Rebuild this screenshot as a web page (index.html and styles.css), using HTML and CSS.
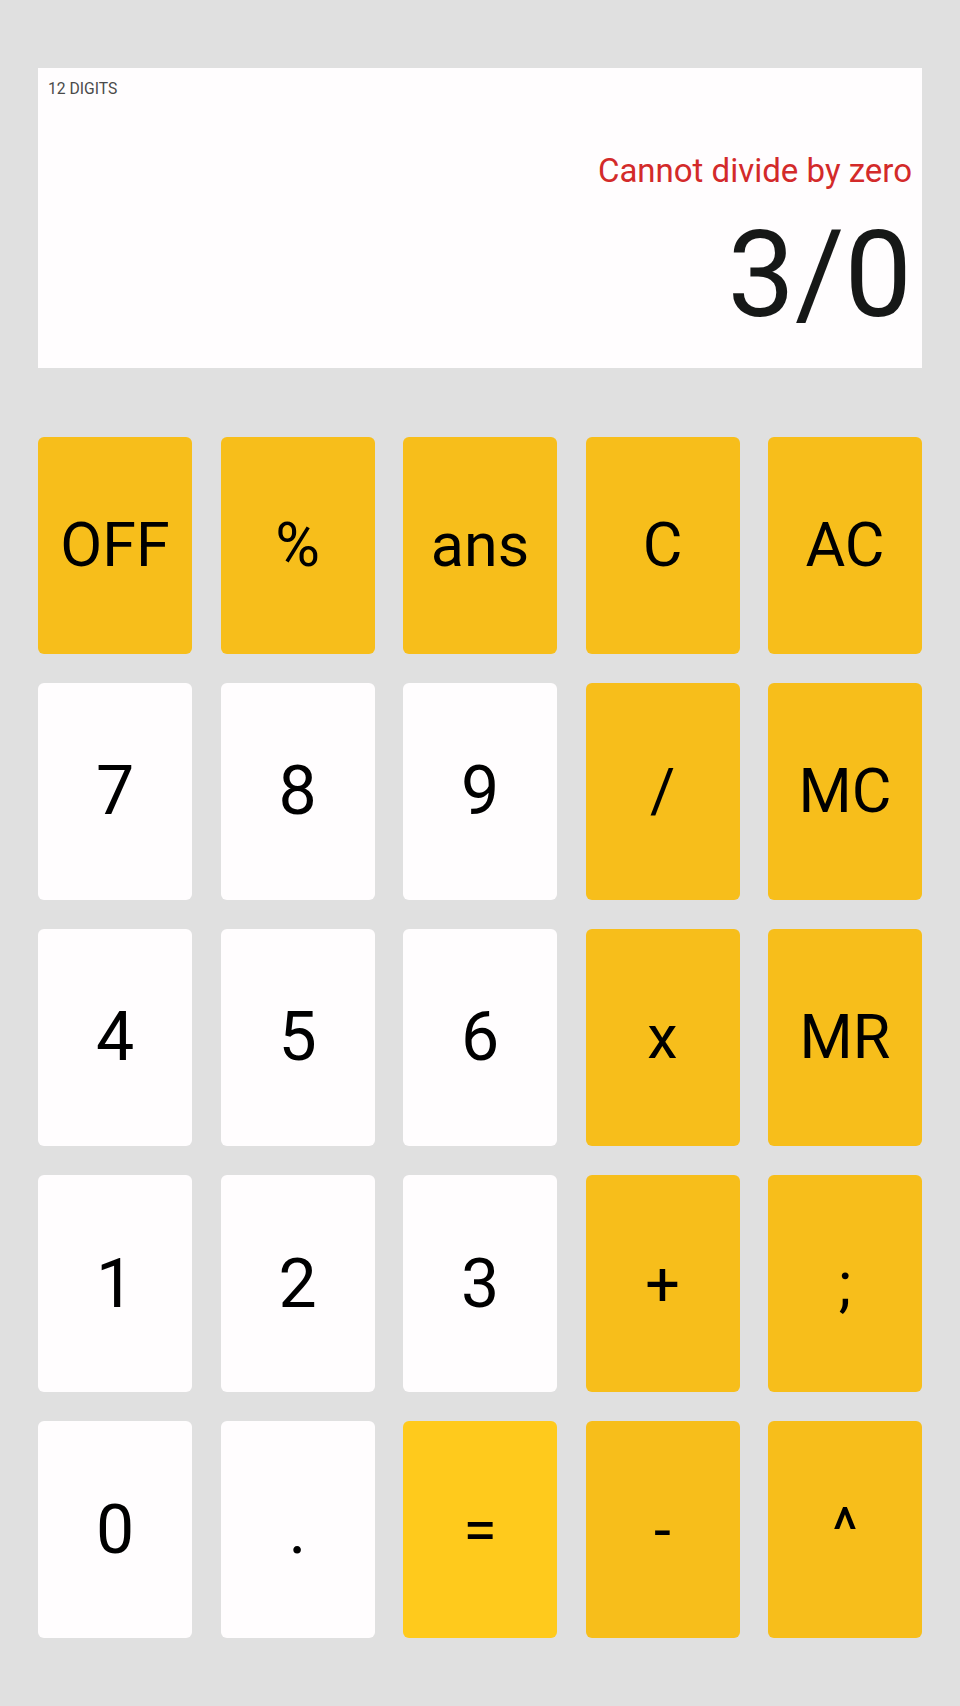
FILE: index.html
```html
<!DOCTYPE html>
<html lang="en">
<head>
<meta charset="utf-8">
<title>Calculator</title>
<link rel="stylesheet" href="styles.css">
</head>
<body>
<main class="calc">
  <section class="display">
    <div class="digits-label">12 DIGITS</div>
    <div class="message">Cannot divide by zero</div>
    <div class="expression">3/0</div>
  </section>
  <section class="keypad">
    <div class="key op">OFF</div>
    <div class="key op">%</div>
    <div class="key op">ans</div>
    <div class="key op">C</div>
    <div class="key op">AC</div>

    <div class="key num">7</div>
    <div class="key num">8</div>
    <div class="key num">9</div>
    <div class="key op">/</div>
    <div class="key op">MC</div>

    <div class="key num">4</div>
    <div class="key num">5</div>
    <div class="key num">6</div>
    <div class="key op">x</div>
    <div class="key op">MR</div>

    <div class="key num">1</div>
    <div class="key num">2</div>
    <div class="key num">3</div>
    <div class="key op">+</div>
    <div class="key op">;</div>

    <div class="key num">0</div>
    <div class="key num">.</div>
    <div class="key op equals">=</div>
    <div class="key op">-</div>
    <div class="key op">^</div>
  </section>
</main>
</body>
</html>
```
FILE: styles.css
```css
html, body {
  margin: 0;
  padding: 0;
  background: #e0e0e0;
  font-family: Roboto, "Liberation Sans", sans-serif;
}

.calc {
  padding: 68px 38px 0;
  width: 884px;
}

.display {
  background: #fffdfe;
  height: 300px;
  box-sizing: border-box;
  padding: 11px 10px 0 10px;
  display: flex;
  flex-direction: column;
}

.digits-label {
  font-size: 15.7px;
  color: #4a4a4a;
  line-height: normal;
}

.message {
  margin-top: 53px;
  align-self: flex-end;
  font-size: 33px;
  color: #d32a2a;
  line-height: normal;
}

.expression {
  margin-top: 14.5px;
  align-self: flex-end;
  font-size: 120px;
  color: #161817;
  line-height: normal;
}

.keypad {
  margin-top: 69px;
  display: grid;
  grid-template-columns: repeat(5, 154px);
  grid-auto-rows: 216.6px;
  column-gap: 28.5px;
  row-gap: 29.5px;
}

.key {
  border-radius: 6px;
  display: flex;
  align-items: center;
  justify-content: center;
  color: #000;
  font-size: 61px;
  line-height: normal;
}

.key.op {
  background: #f7be1b;
}

.key.equals {
  background: #ffca1c;
}

.key.num {
  background: #fffdfe;
  font-size: 68px;
}
```
